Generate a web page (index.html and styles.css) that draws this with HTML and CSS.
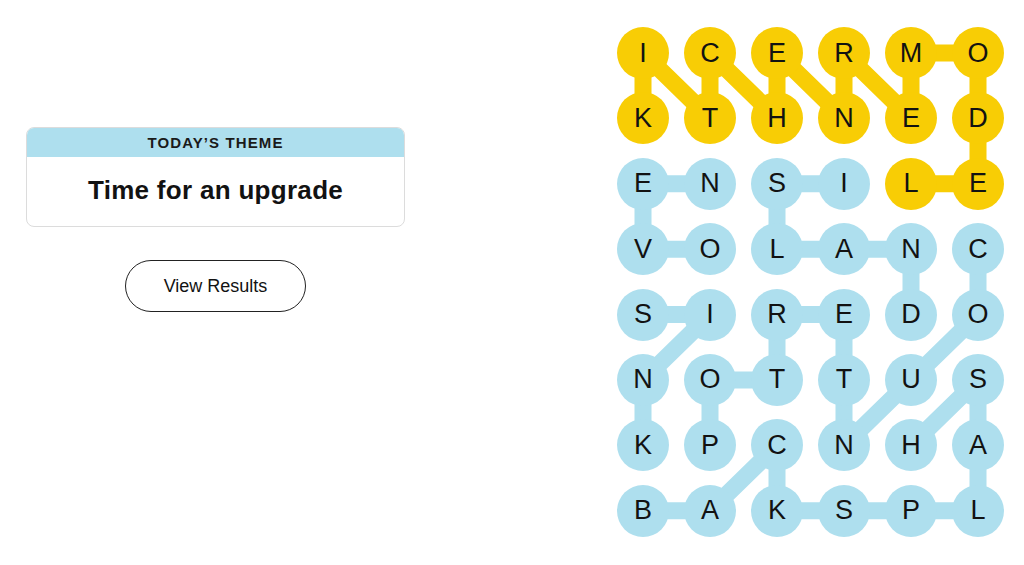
FILE: index.html
```html
<!DOCTYPE html>
<html lang="en">
<head>
<meta charset="utf-8">
<title>Strands</title>
<link rel="stylesheet" href="styles.css">
</head>
<body>
<main class="game">
  <section class="side">
    <div class="theme-card">
      <div class="theme-label">TODAY’S THEME</div>
      <div class="theme-title">Time for an upgrade</div>
    </div>
    <button class="results-btn" type="button">View Results</button>
  </section>

  <section class="board">
    <!-- word paths drawn beneath the letter circles -->
    <svg class="paths" viewBox="0 0 387 510" width="387" height="510" aria-hidden="true">
      <g fill="none" stroke-width="17" stroke-linejoin="round" stroke-linecap="round">
        <!-- KITCHENREMODEL -->
        <polyline class="spangram" points="26,91.4 26,26 93,91.4 93,26 160,91.4 160,26 227,91.4 227,26 294,91.4 294,26 361,26 361,91.4 361,156.8 294,156.8"/>
        <!-- OVEN -->
        <polyline class="word" points="93,222.2 26,222.2 26,156.8 93,156.8"/>
        <!-- ISLAND -->
        <polyline class="word" points="227,156.8 160,156.8 160,222.2 227,222.2 294,222.2 294,287.6"/>
        <!-- SINK -->
        <polyline class="word" points="26,287.6 93,287.6 26,353 26,418.4"/>
        <!-- COUNTERTOP -->
        <polyline class="word" points="361,222.2 361,287.6 294,353 227,418.4 227,353 227,287.6 160,287.6 160,353 93,353 93,418.4"/>
        <!-- BACKSPLASH -->
        <polyline class="word" points="26,483.8 93,483.8 160,418.4 160,483.8 227,483.8 294,483.8 361,483.8 361,418.4 361,353 294,418.4"/>
      </g>
    </svg>

    <span class="cell gold">I</span><span class="cell gold">C</span><span class="cell gold">E</span><span class="cell gold">R</span><span class="cell gold">M</span><span class="cell gold">O</span>
    <span class="cell gold">K</span><span class="cell gold">T</span><span class="cell gold">H</span><span class="cell gold">N</span><span class="cell gold">E</span><span class="cell gold">D</span>
    <span class="cell blue">E</span><span class="cell blue">N</span><span class="cell blue">S</span><span class="cell blue">I</span><span class="cell gold">L</span><span class="cell gold">E</span>
    <span class="cell blue">V</span><span class="cell blue">O</span><span class="cell blue">L</span><span class="cell blue">A</span><span class="cell blue">N</span><span class="cell blue">C</span>
    <span class="cell blue">S</span><span class="cell blue">I</span><span class="cell blue">R</span><span class="cell blue">E</span><span class="cell blue">D</span><span class="cell blue">O</span>
    <span class="cell blue">N</span><span class="cell blue">O</span><span class="cell blue">T</span><span class="cell blue">T</span><span class="cell blue">U</span><span class="cell blue">S</span>
    <span class="cell blue">K</span><span class="cell blue">P</span><span class="cell blue">C</span><span class="cell blue">N</span><span class="cell blue">H</span><span class="cell blue">A</span>
    <span class="cell blue">B</span><span class="cell blue">A</span><span class="cell blue">K</span><span class="cell blue">S</span><span class="cell blue">P</span><span class="cell blue">L</span>
  </section>
</main>
</body>
</html>
```

FILE: styles.css
```css
:root {
  --ink: #121212;
  --gold: #f8cd05;
  --blue: #aedfee;
}

html, body {
  margin: 0;
  padding: 0;
  background: #ffffff;
  color: var(--ink);
  font-family: "Liberation Sans", Arial, sans-serif;
}

.game {
  display: flex;
  align-items: flex-start;
  gap: 212px;
  padding: 27px 0 0 26px;
}

/* left column: theme card and results button */
.side {
  width: 379px;
  padding-top: 100px;
  display: flex;
  flex-direction: column;
  align-items: center;
  gap: 33px;
}

.theme-card {
  width: 100%;
  box-sizing: border-box;
  border: 1px solid #dcdcdc;
  border-radius: 8px;
  overflow: hidden;
}

.theme-label {
  height: 29px;
  background: var(--blue);
  display: flex;
  align-items: center;
  justify-content: center;
  font-size: 15px;
  font-weight: 700;
  letter-spacing: 1.1px;
  color: #1a1a1a;
}

.theme-title {
  height: 69px;
  display: flex;
  align-items: center;
  justify-content: center;
  padding-bottom: 2px;
  box-sizing: border-box;
  font-size: 26px;
  font-weight: 700;
  letter-spacing: 0.3px;
}

.results-btn {
  width: 181px;
  height: 52px;
  border: 1px solid #222;
  border-radius: 26px;
  background: #fff;
  color: var(--ink);
  font-family: inherit;
  font-size: 18px;
  padding: 0;
  cursor: pointer;
}

/* letter board */
.board {
  position: relative;
  display: grid;
  grid-template-columns: repeat(6, 52px);
  grid-auto-rows: 52px;
  column-gap: 15px;
  row-gap: 13.4px;
}

.paths {
  position: absolute;
  left: 0;
  top: 0;
  z-index: 0;
}

.paths .spangram { stroke: var(--gold); }
.paths .word { stroke: var(--blue); }

.cell {
  position: relative;
  z-index: 1;
  width: 52px;
  height: 52px;
  border-radius: 50%;
  display: flex;
  align-items: center;
  justify-content: center;
  font-size: 27px;
  line-height: 1;
  color: var(--ink);
}

.cell.gold { background: var(--gold); }
.cell.blue { background: var(--blue); }
```
